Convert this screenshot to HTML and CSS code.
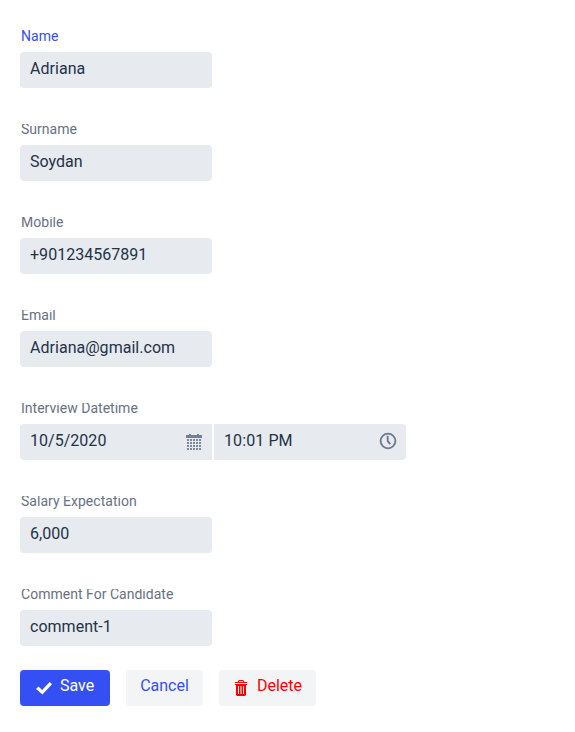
FILE: index.html
```html
<!DOCTYPE html>
<html lang="en"><head><meta charset="utf-8"><title>Candidate</title><link rel="stylesheet" href="styles.css"></head>
<body><form class="form">
<div class="field active"><label><span>Name</span></label><div class="input">Adriana</div></div>
<div class="field"><label><span>Surname</span></label><div class="input">Soydan</div></div>
<div class="field"><label><span>Mobile</span></label><div class="input">+901234567891</div></div>
<div class="field"><label><span>Email</span></label><div class="input">Adriana@gmail.com</div></div>
<div class="field"><label><span>Interview Datetime</span></label><div class="pair">
<div class="input date">10/5/2020<svg class="icon" width="16" height="17" viewBox="0 0 16 17"><path fill="#728096" d="M0 1h3V0h2v1h6V0h2v1h3v3H0z"/><path stroke="#7b879b" stroke-width="2" stroke-dasharray="2 1" d="M1 6h14M1 9h14M1 12h14M1 15h14"/></svg></div>
<div class="input time">10:01 PM<svg class="icon" width="18" height="18" viewBox="0 0 18 18" fill="none" stroke="#6b7890"><circle cx="9" cy="9" r="7.4" stroke-width="1.8"/><path stroke-width="1.9" d="M8.7 3.8v5.4l2.6 3"/></svg></div></div></div>
<div class="field"><label><span>Salary Expectation</span></label><div class="input">6,000</div></div>
<div class="field"><label><span>Comment For Candidate</span></label><div class="input">comment-1</div></div>
<div class="actions">
<button type="button" class="btn save"><svg width="16" height="14" viewBox="0 0 16 14"><path fill="#fff" d="M0 8l2.5-2.4 3.6 3.5L13.7 1 16 3.2 6.5 13.5z"/></svg><span>Save</span></button>
<button type="button" class="btn cancel"><span>Cancel</span></button>
<button type="button" class="btn delete"><svg width="12" height="16" viewBox="0 0 12 16"><path fill="#f00" fill-rule="evenodd" d="M3 2V1l1-1h4l1 1v1h3v1H0V2zm1 0h4V1H4zM0 4h12v1h-1v10l-1 1H2l-1-1V5H0zM3 6v8h1V6zm2.5 0v8h1V6zM8 6v8h1V6z"/></svg><span>Delete</span></button>
</div></form></body></html>
```
FILE: styles.css
```css
body{margin:0;background:#fff;font:16px/20px Roboto,sans-serif;color:#233348}
.form{padding:20px}
.field{height:93px;box-sizing:border-box;padding-top:8px}
.field label{display:block;height:24px;padding-left:1px;font-size:14px;line-height:16px;color:#687182;letter-spacing:.02px}
.field:not(.active) label{clip-path:inset(3px 0 0 0);}
.field.active label{color:#3450f5}
.input{position:relative;box-sizing:border-box;width:192px;height:36px;padding:7px 10px;border-radius:4px;background:#e7eaef;letter-spacing:.03px}
.pair{display:flex;gap:2px}
.icon{position:absolute;right:9px;top:9px}
.date{border-radius:4px 0 0 4px}
.date .icon{right:10px;top:10px}
.time{border-radius:0 4px 4px 0;letter-spacing:.1px}
.time .icon{top:8px}
.actions{display:flex;gap:16px;margin-top:-1px}
.btn{display:flex;box-sizing:border-box;height:36px;border:0;border-radius:4px;padding:0;justify-content:center;background:#f3f4f6;color:#3450f5;font:400 16px/32px Roboto,sans-serif}
.save{width:90px;background:#3450f5;color:#fff;gap:8px}
.save svg{margin-top:11px}
.cancel{width:77px}
.delete{width:97px;padding-left:2px;color:#f00;gap:10px}
.delete svg{margin-top:10px}
```
